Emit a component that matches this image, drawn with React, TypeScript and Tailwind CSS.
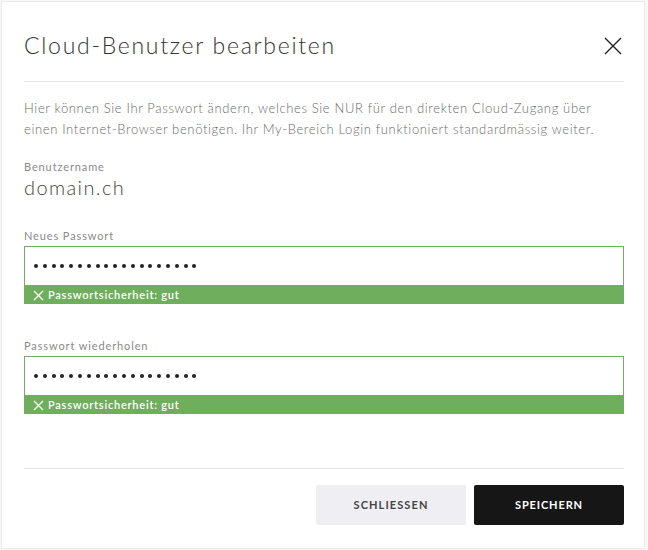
function StrengthX() {
  return (
    <svg width="11" height="11" viewBox="0 0 11 11" fill="none" stroke="currentColor" strokeWidth="1.3">
      <path d="M1 1 L10 10 M10 1 L1 10" />
    </svg>
  );
}

function PasswordField({ label, className }: { label: string; className: string }) {
  return (
    <div className={className}>
      <div className="text-[11px] leading-[14px] tracking-[0.08em] text-[#8a8a8a]">{label}</div>
      <div className="mt-[3px] h-[40px] border border-[#71b060] bg-white flex items-center pl-[9px] gap-[4.8px]">
        {Array.from({ length: 19 }).map((_, i) => (
          <span key={i} className="w-[4px] h-[4px] rounded-full bg-[#222]" />
        ))}
      </div>
      <div className="h-[18px] bg-[#6fae5d] flex items-center gap-[4px] pl-[9px] text-white text-[11px] font-semibold tracking-[0.07em]">
        <StrengthX />
        <span>Passwortsicherheit: gut</span>
      </div>
    </div>
  );
}

export default function App() {
  return (
    <div className="w-[648px] h-[550px] bg-[#f7f7f7] p-[1px] pr-[3px]" style={{ fontFamily: "Lato, 'Open Sans', sans-serif" }}>
      <div className="h-full bg-white border border-[#ebebeb] pl-[22px] pr-[20px] flex flex-col">
        <div className="flex items-center justify-between h-[80px] border-b border-[#e3e3e3]">
          <h1 className="text-[23px] font-light text-[#333] tracking-[0.075em] mt-[8px]">Cloud-Benutzer bearbeiten</h1>
          <svg width="18" height="18" viewBox="0 0 18 18" fill="none" stroke="#222" strokeWidth="1.4" className="mt-[8px] mr-[2px]">
            <path d="M1 1 L17 17 M17 1 L1 17" />
          </svg>
        </div>
        <p className="mt-[16px] text-[13px] leading-[21px] text-[#6b6b6b] font-light tracking-[0.05em]">
          Hier können Sie Ihr Passwort ändern, welches Sie NUR für den direkten Cloud-Zugang über
          <br />
          einen Internet-Browser benötigen. Ihr My-Bereich Login funktioniert standardmässig weiter.
        </p>
        <div className="mt-[20px] text-[11px] leading-[14px] tracking-[0.08em] text-[#8a8a8a]">Benutzername</div>
        <div className="mt-[1px] text-[20px] leading-[24px] text-[#444] font-light tracking-[0.07em]">domain.ch</div>
        <PasswordField label="Neues Passwort" className="mt-[30px]" />
        <PasswordField label="Passwort wiederholen" className="mt-[35px]" />
        <div className="mt-[54px] border-t border-[#e3e3e3]" />
        <div className="mt-[16px] flex justify-end gap-[8px]">
          <button className="w-[150px] h-[40px] bg-[#efeff3] rounded-[2px] text-[11px] font-bold tracking-[0.1em] text-[#444]">SCHLIESSEN</button>
          <button className="w-[150px] h-[40px] bg-[#161616] rounded-[2px] text-[11px] font-bold tracking-[0.08em] text-white">SPEICHERN</button>
        </div>
      </div>
    </div>
  );
}
